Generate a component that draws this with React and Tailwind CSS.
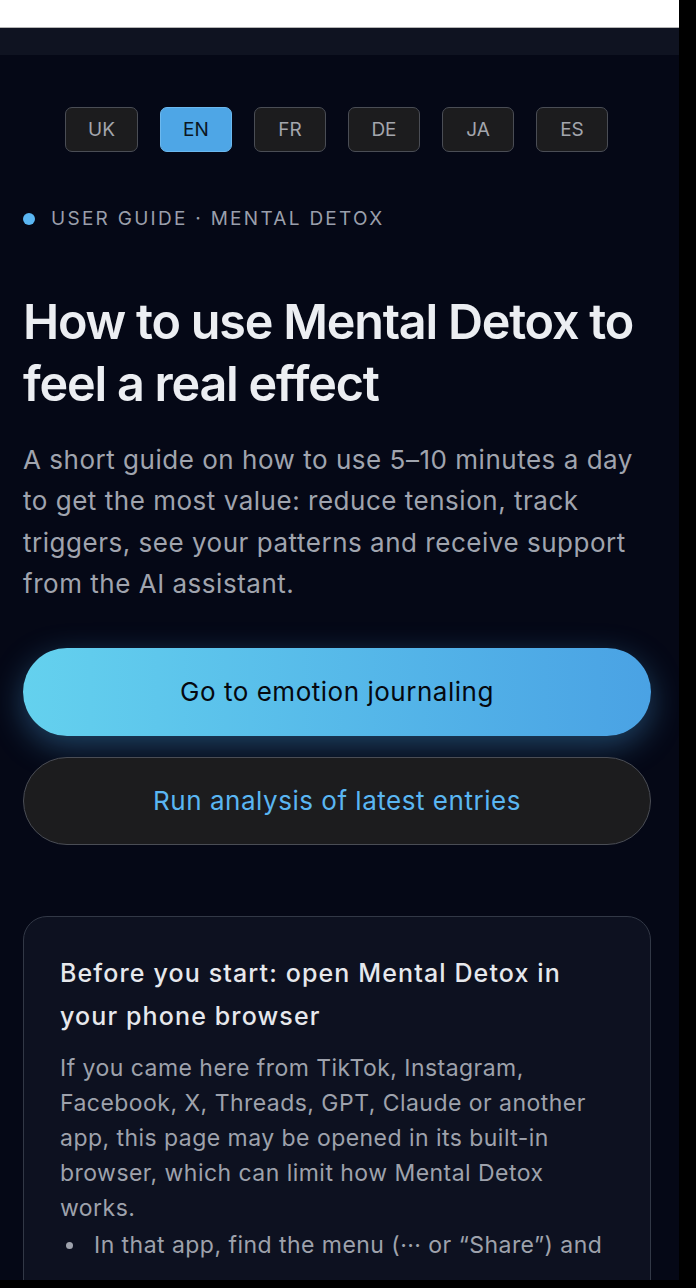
import React from "react";

const languages = ["UK", "EN", "FR", "DE", "JA", "ES"];

function LangSwitch({ active = "EN" }) {
  return (
    <div className="flex justify-center gap-[22px] pt-[52px] pr-[6px]">
      {languages.map((code) => {
        const isActive = code === active;
        return (
          <button
            key={code}
            type="button"
            className={`h-[45px] min-w-[72px] rounded-[7px] border-[1.5px] px-[22px] text-[19px] leading-none ${
              isActive
                ? "border-[#6cb8ee] bg-[#4ea6e6] text-[#0b1622]"
                : "border-[#4a4d55] bg-[#1c1c1e] text-[#a3a6ad]"
            }`}
          >
            {code}
          </button>
        );
      })}
    </div>
  );
}

export default function App() {
  return (
    <div className="min-h-[1288px] bg-black" style={{ fontFamily: "Inter, 'Noto Sans', sans-serif" }}>
      <div className="h-[1280px] w-[679px] overflow-hidden bg-[#050816]">
        <div className="h-[28px] border-b border-[#b5b5b5] bg-white" />
        <div className="h-[27px] bg-[#0f1321]" />

        <LangSwitch active="EN" />

        <main className="px-[23px]">
          <div className="mt-[53px] flex items-center gap-[16px]">
            <span className="h-[12px] w-[12px] rounded-full bg-[#5ab6f2]" />
            <span className="text-[19px] uppercase tracking-[0.12em] text-[#9a9fab]">
              User guide · Mental Detox
            </span>
          </div>

          <h1 className="mt-[57px] w-[640px] text-[48.5px] font-semibold leading-[62px] tracking-[-0.025em] text-[#eceef2]">
            How to use Mental Detox to feel a real effect
          </h1>

          <p className="mt-[24px] w-[630px] text-[26px] leading-[41.5px] tracking-[0.02em] text-[#a0a4ae]">
            A short guide on how to use 5–10 minutes a day to get the most value: reduce tension, track
            triggers, see your patterns and receive support from the AI assistant.
          </p>

          <div className="mt-[43px] flex w-[628px] flex-col gap-[21px]">
            <button
              type="button"
              className="h-[88px] rounded-full bg-gradient-to-r from-[#64d1ee] to-[#4aa2e4] text-[26px] tracking-[0.02em] text-[#05080f] shadow-[0_10px_32px_rgba(74,162,228,0.38)]"
            >
              Go to emotion journaling
            </button>
            <button
              type="button"
              className="h-[88px] rounded-full border-[1.5px] border-[#4a4d55] bg-[#1c1c1e] text-[26px] tracking-[0.02em] text-[#5ab6f2]"
            >
              Run analysis of latest entries
            </button>
          </div>

          <section className="mt-[71px] w-[628px] rounded-[24px] border-[1.5px] border-[#323846] bg-[#0d1120] px-[36px] pt-[35px] pb-[40px]">
            <h2 className="text-[25px] font-medium leading-[43px] tracking-[0.045em] text-[#e6e8ec]">
              Before you start: open Mental Detox in your phone browser
            </h2>
            <p className="mt-[13px] text-[23px] leading-[35px] tracking-[0.02em] text-[#9ea2ac]">
              If you came here from TikTok, Instagram, Facebook, X, Threads, GPT, Claude or another app,
              this page may be opened in its built-in browser, which can limit how Mental Detox works.
            </p>
            <ul className="mt-[2px] text-[23px] leading-[35px] tracking-[0.02em] text-[#9ea2ac]">
              <li className="flex gap-[21px] pl-[6px]">
                <span className="mt-[14px] h-[7px] w-[7px] shrink-0 rounded-full bg-[#9ea2ac]" />
                <span>In that app, find the menu (··· or “Share”) and</span>
              </li>
            </ul>
          </section>
        </main>
      </div>
    </div>
  );
}
